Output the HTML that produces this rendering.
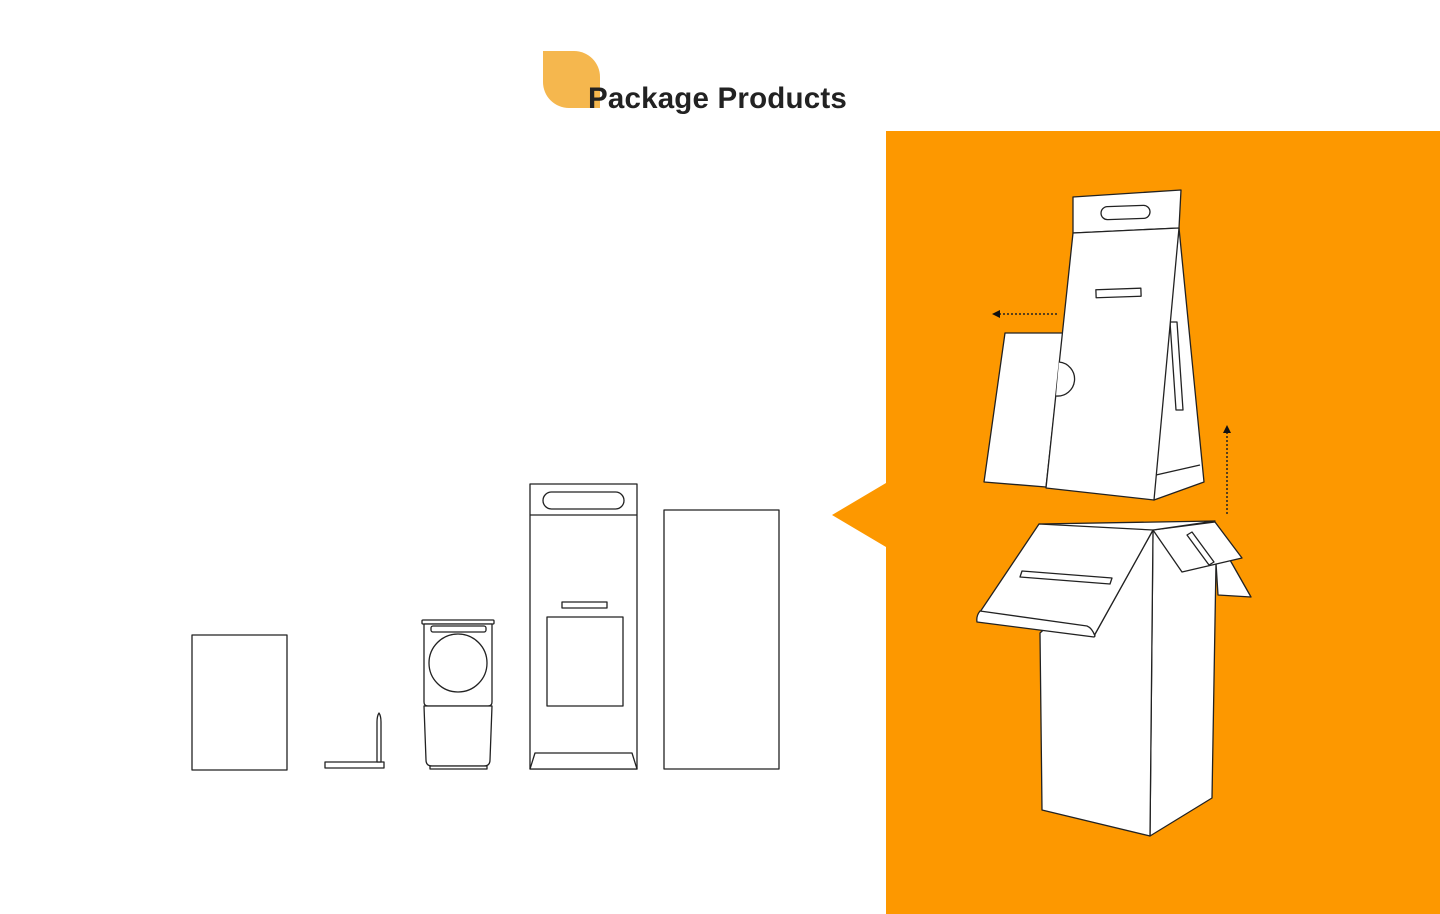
<!DOCTYPE html>
<html><head><meta charset="utf-8"><style>
html,body{margin:0;padding:0;background:#fff;width:1440px;height:914px;overflow:hidden;position:relative}
.leaf{position:absolute;left:543px;top:51px;width:57px;height:57px;background:#f5b74e;border-radius:0 26px 0 26px}
h1{position:absolute;left:588px;top:82px;margin:0;font:bold 29.5px "Liberation Sans",sans-serif;color:#222;letter-spacing:0.2px}
svg{position:absolute;left:0;top:0}
</style></head><body>
<div class="leaf"></div>
<h1>Package Products</h1>
<svg width="1440" height="914" viewBox="0 0 1440 914">
<rect x="886" y="131" width="554" height="783" fill="#fd9800"/>
<polygon points="832,515 886,483 886,547" fill="#fd9800"/>
<g fill="#fff" stroke="#222" stroke-width="1.3" stroke-linejoin="round">
<rect x="192" y="635" width="95" height="135"/>
<rect x="325" y="762" width="59" height="6"/>
<path d="M377,762 L377,722 Q377,716 379,713 Q381,716 381,722 L381,762Z"/>
<rect x="422" y="620" width="72" height="4" rx="1"/>
<path d="M424,624 L492,624 L492,702 Q492,706 488,706 L428,706 Q424,706 424,702Z"/>
<rect x="431" y="626" width="55" height="6" rx="2"/>
<circle cx="458" cy="663" r="29"/>
<path d="M424,706 L492,706 L490,760 Q490,766 484,766 L432,766 Q426,766 426,760Z"/>
<rect x="430" y="766" width="57" height="3"/>
<rect x="530" y="484" width="107" height="285"/>
<line x1="530" y1="515" x2="637" y2="515"/>
<rect x="543" y="492" width="81" height="17" rx="8.5"/>
<rect x="562" y="602" width="45" height="6"/>
<rect x="547" y="617" width="76" height="89"/>
<path d="M535,753 L632,753 L637,769 L530,769Z"/>
<rect x="664" y="510" width="115" height="259"/>
<!-- standee -->
<path d="M1005,333 L1063,333 L1046,487 L984,482Z"/>
<path d="M1179,228 L1204,482 L1154,500 L1153,470Z"/>
<path d="M1156,475 L1200,465"/>
<path d="M1170,322 L1177,322 L1183,410 L1176,410Z" />
<path d="M1073,197 L1181,190 L1179,228 L1073,233Z"/>
<rect x="1101" y="206" width="49" height="13" rx="6.5" transform="rotate(-2 1125 212)"/>
<path d="M1073,233 L1179,228 L1154,500 L1046,488Z"/>
<path d="M1059,362 A17,17 0 0 1 1056,396"/>
<rect x="1096" y="289" width="45" height="8" transform="rotate(-2 1118 293)"/>
<!-- box -->
<path d="M1153,530 L1216,563 L1212,798 L1150,836Z"/>
<path d="M1040,633 L1153,530 L1150,836 L1042,810Z"/>
<path d="M1216,563 L1230,560 L1251,597 L1218,595Z"/>
<path d="M1153,530 L1215,522 L1242,558 L1182,572Z"/>
<path d="M1187,535 L1192,532 L1214,562 L1209,565Z"/>
<path d="M1039,524 L1215,521 L1153,530 L1094,636 L1040,628Z"/>
<path d="M1039,524 L1153,530 L1094,636 L980,612Z"/>
<path d="M980,611 L1087,626 Q1092,628 1095,636 L1094,637 L977,622 Q976,616 980,611Z"/>
<path d="M1022,571 L1112,578 L1110,584 L1020,577Z"/>
</g>
<g stroke="#222" stroke-width="1.5" stroke-dasharray="2,2" fill="none">
<line x1="1057" y1="314" x2="1000" y2="314"/>
<line x1="1227" y1="514" x2="1227" y2="432"/>
</g>
<polygon points="992,314 1000,310 1000,318" fill="#111"/>
<polygon points="1227,425 1223,433 1231,433" fill="#111"/>
</svg>
</body></html>
